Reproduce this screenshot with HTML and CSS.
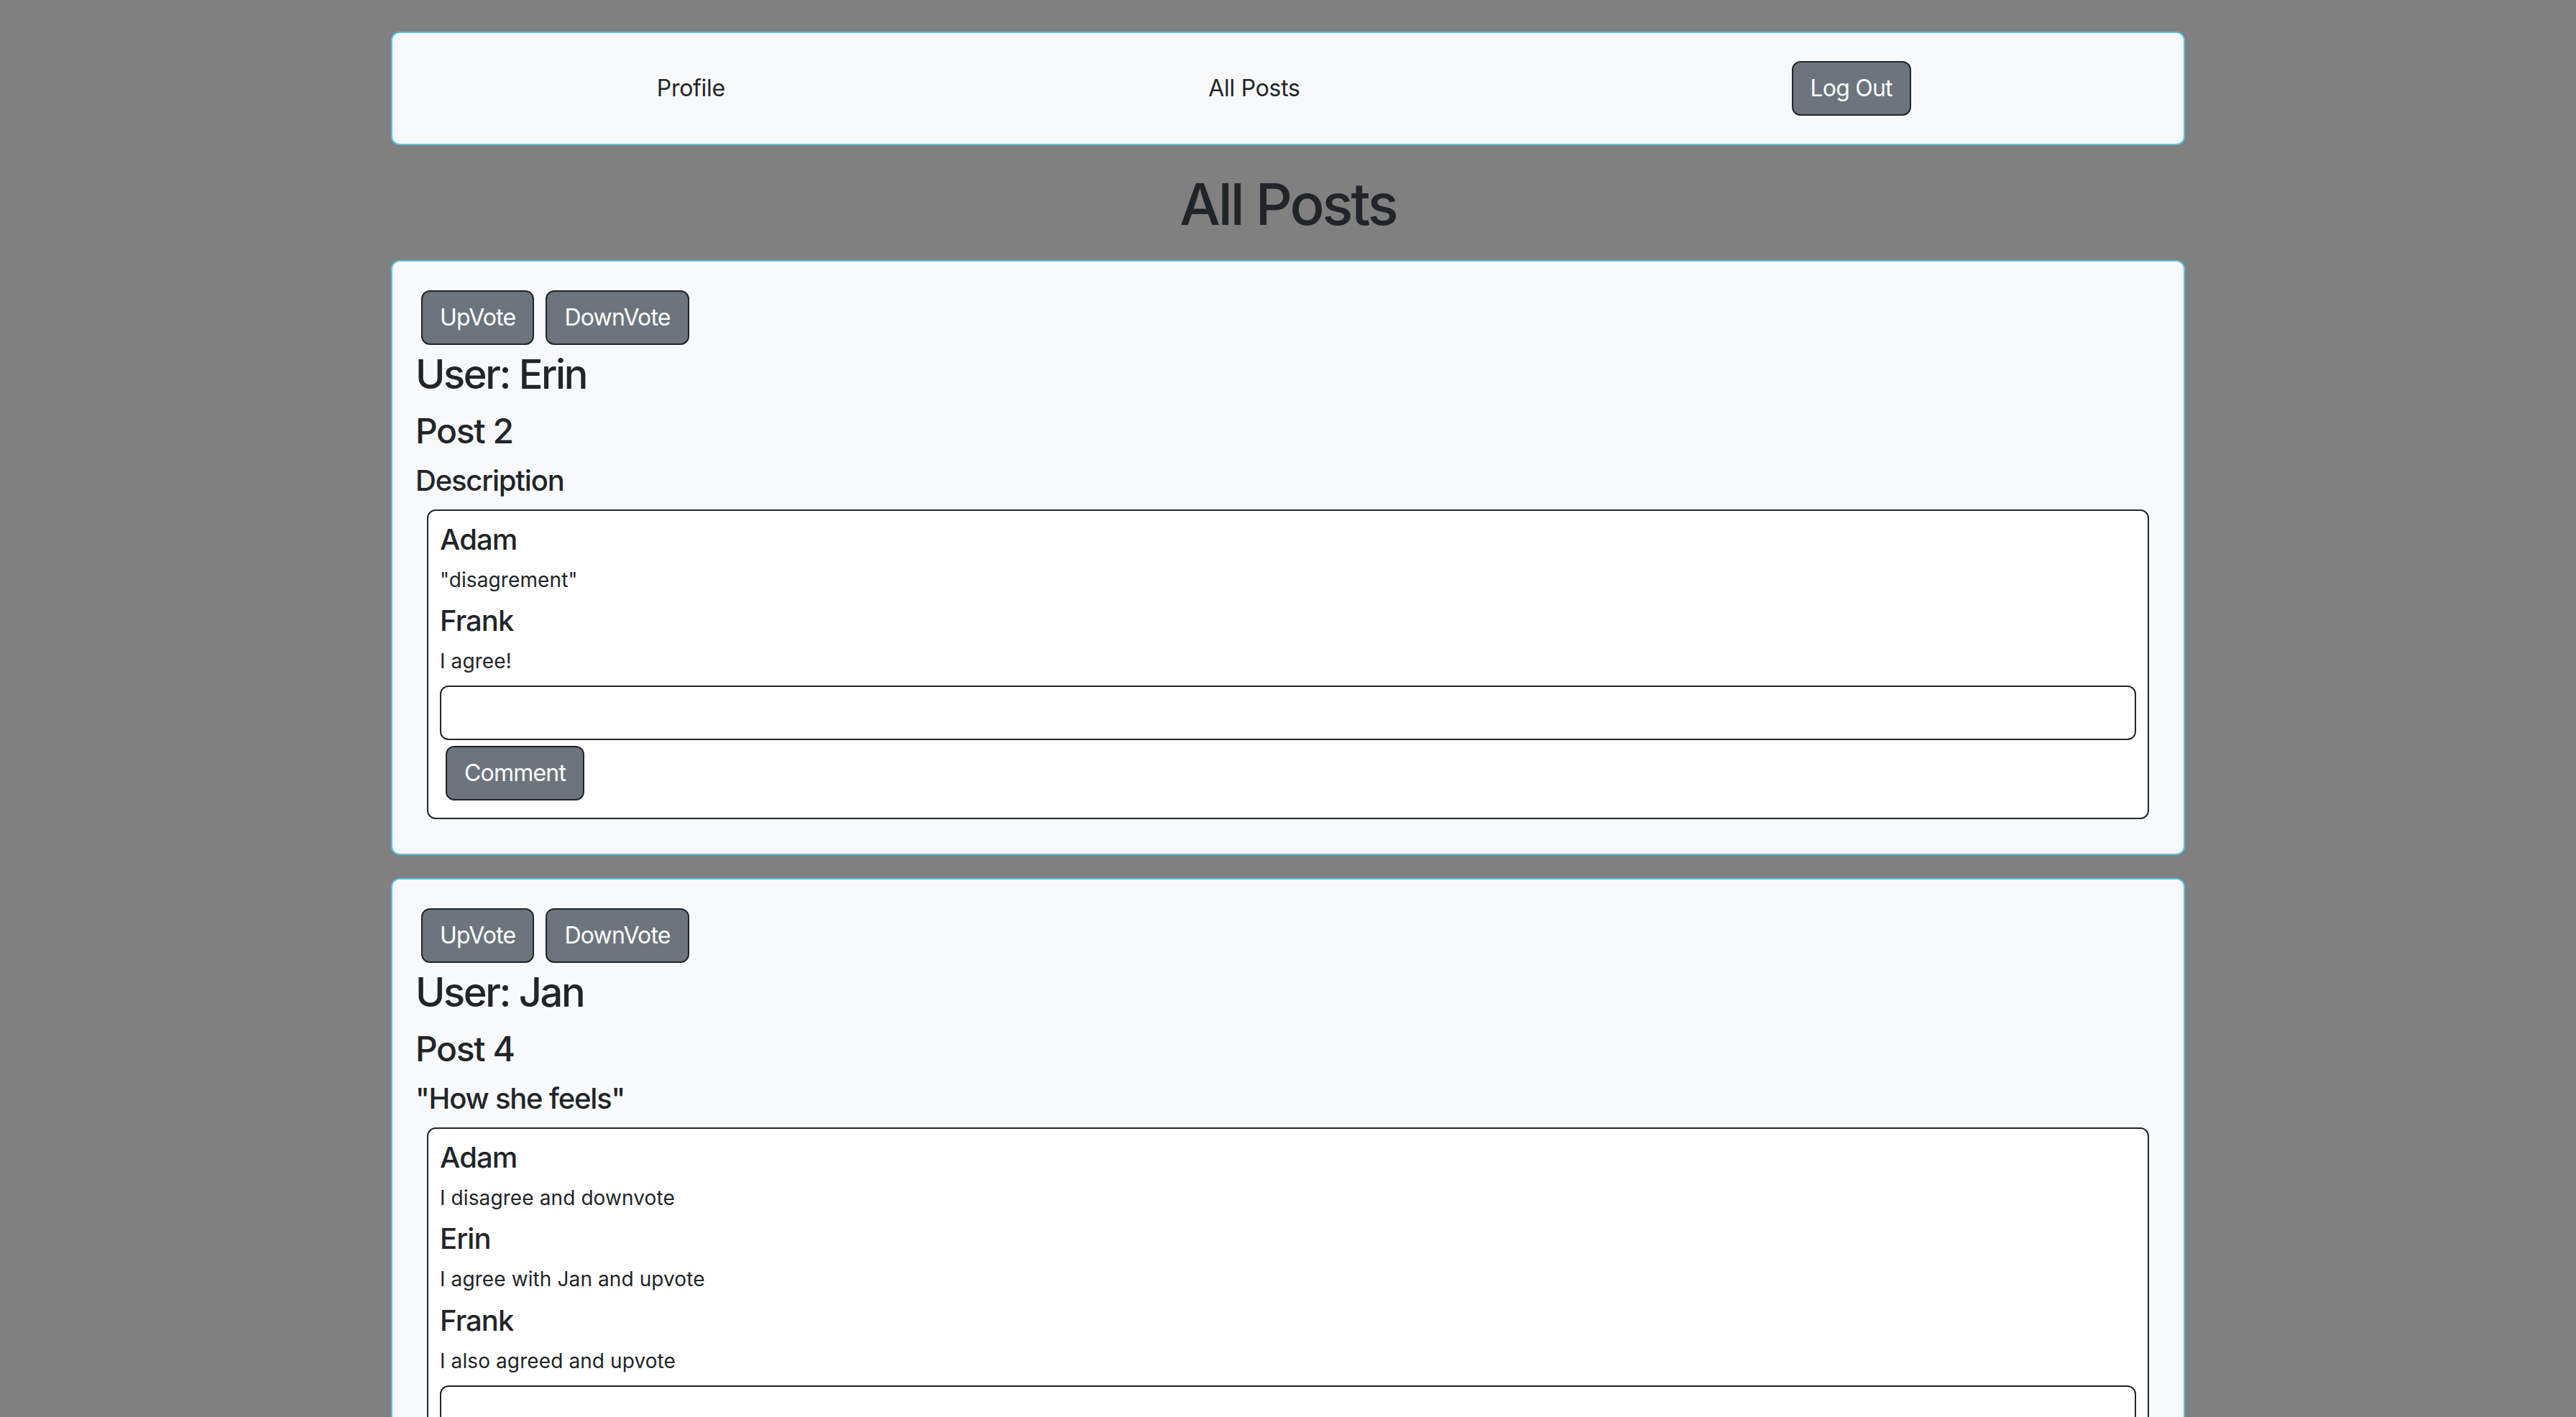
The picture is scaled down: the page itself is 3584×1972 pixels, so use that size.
FILE: index.html
```html
<!DOCTYPE html>
<html lang="en">
<head>
<meta charset="utf-8">
<title>All Posts</title>
<link rel="stylesheet" href="styles.css">
</head>
<body>
<div class="page">
  <nav class="topnav">
    <div class="nav-cell"><a class="nav-link" href="#">Profile</a></div>
    <div class="nav-cell shifted"><a class="nav-link" href="#">All Posts</a></div>
    <div class="nav-cell shifted"><button class="btn">Log Out</button></div>
  </nav>

  <h1 class="page-title">All Posts</h1>

  <section class="post">
    <div class="votes">
      <button class="btn vote">UpVote</button>
      <button class="btn vote">DownVote</button>
    </div>
    <h3 class="post-user">User: Erin</h3>
    <h4 class="post-title">Post 2</h4>
    <h5 class="post-desc">Description</h5>
    <div class="comments">
      <h5 class="c-author">Adam</h5>
      <p class="c-text">"disagrement"</p>
      <h5 class="c-author">Frank</h5>
      <p class="c-text">I agree!</p>
      <input class="c-input" type="text">
      <button class="btn c-btn">Comment</button>
    </div>
  </section>

  <section class="post">
    <div class="votes">
      <button class="btn vote">UpVote</button>
      <button class="btn vote">DownVote</button>
    </div>
    <h3 class="post-user">User: Jan</h3>
    <h4 class="post-title">Post 4</h4>
    <h5 class="post-desc">"How she feels"</h5>
    <div class="comments">
      <h5 class="c-author">Adam</h5>
      <p class="c-text">I disagree and downvote</p>
      <h5 class="c-author">Erin</h5>
      <p class="c-text">I agree with Jan and upvote</p>
      <h5 class="c-author">Frank</h5>
      <p class="c-text">I also agreed and upvote</p>
      <input class="c-input" type="text">
      <button class="btn c-btn">Comment</button>
    </div>
  </section>
</div>
</body>
</html>
```

FILE: styles.css
```css
* {
  box-sizing: border-box;
}

html, body {
  margin: 0;
  padding: 0;
  background: #808080;
}

body {
  font-family: Inter, "Liberation Sans", "Noto Sans", sans-serif;
  color: #212529;
  font-size: 32px;
  line-height: 1.5;
}

.page {
  width: 2496px;
  margin: 0 auto;
  padding-top: 44px;
}

.topnav {
  display: grid;
  grid-template-columns: 1fr 1fr 1fr;
  align-items: center;
  justify-items: center;
  background: #f8f9fa;
  border: 2px solid #5bc4e6;
  border-radius: 12px;
  padding: 39px 0;
  margin-bottom: 34px;
}

.nav-cell {
  display: flex;
  justify-content: center;
  width: 100%;
}

.nav-cell.shifted {
  padding-right: 94px;
}

.nav-link {
  color: #212529;
  text-decoration: none;
  font-size: 32px;
  letter-spacing: -0.3px;
}

.btn {
  font-family: inherit;
  font-size: 32px;
  line-height: 48px;
  color: #ffffff;
  background: #6c757d;
  border: 2px solid #212529;
  border-radius: 12px;
  padding: 12px 24px;
  letter-spacing: -0.8px;
  cursor: pointer;
}

.page-title {
  font-size: 80px;
  font-weight: 500;
  line-height: 1.2;
  text-align: center;
  margin: 0 0 30px;
  letter-spacing: -3.2px;
}

.post {
  background: #f8f9fa;
  border: 2px solid #5bc4e6;
  border-radius: 12px;
  padding: 32px;
  margin-bottom: 32px;
}

.votes {
  display: flex;
}

.vote {
  margin: 8px;
}

.post-user,
.post-title,
.post-desc,
.c-author {
  font-weight: 500;
  line-height: 1.2;
  margin: 0 0 16px;
}

.post-user {
  font-size: 56px;
  letter-spacing: -2.4px;
}

.post-title {
  font-size: 48px;
  letter-spacing: -1.4px;
}

.post-desc {
  font-size: 40px;
  letter-spacing: -1.2px;
}

.c-author {
  font-size: 40px;
  letter-spacing: -0.9px;
}

.comments {
  background: #ffffff;
  border: 2px solid #212529;
  border-radius: 12px;
  padding: 16px;
  margin: 16px;
}

.c-text {
  font-size: 28px;
  line-height: 1.2;
  margin: 0 0 16px;
  font-weight: 400;
  letter-spacing: 0.1px;
}

.c-input {
  display: block;
  width: 100%;
  height: 76px;
  border: 2px solid #212529;
  border-radius: 12px;
  background: #ffffff;
  font-family: inherit;
  font-size: 32px;
  padding: 12px 24px;
}

.c-btn {
  margin: 8px;
}
```
